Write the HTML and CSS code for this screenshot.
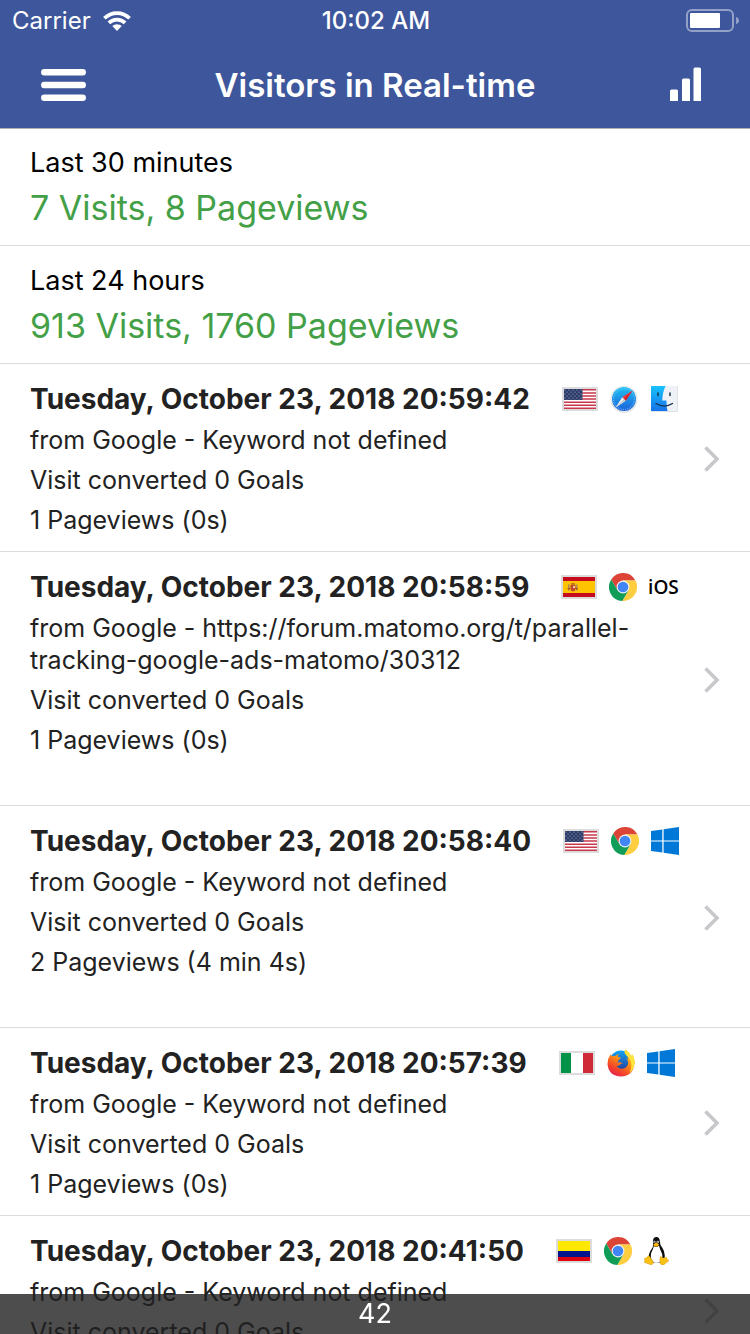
FILE: index.html
```html
<!DOCTYPE html>
<html lang="en">
<head>
<meta charset="utf-8">
<meta name="viewport" content="width=device-width, initial-scale=1">
<title>Visitors in Real-time</title>
<link rel="stylesheet" href="styles.css">
</head>
<body>
<svg class="sprite" aria-hidden="true">
  <defs>
    <linearGradient id="g-safari" x1="0" y1="0" x2="0" y2="1"><stop offset="0" stop-color="#1fc2f5"/><stop offset="1" stop-color="#1c5fd8"/></linearGradient>
    <linearGradient id="g-finder" x1="0" y1="0" x2="0" y2="1"><stop offset="0" stop-color="#17c3fb"/><stop offset="1" stop-color="#1673ea"/></linearGradient>
    <linearGradient id="g-fox" x1="0.8" y1="0" x2="0.2" y2="1"><stop offset="0" stop-color="#ffd82b"/><stop offset="0.45" stop-color="#ff8a16"/><stop offset="0.75" stop-color="#f4422b"/><stop offset="1" stop-color="#e01f55"/></linearGradient>
    <linearGradient id="g-globe" x1="0" y1="0" x2="0" y2="1"><stop offset="0" stop-color="#12a4f2"/><stop offset="1" stop-color="#2a2f8f"/></linearGradient>
    <pattern id="p-stars" width="4" height="4" patternUnits="userSpaceOnUse"><rect width="4" height="4" fill="#2b3a68"/><circle cx="1" cy="1" r="0.6" fill="#b9c0d6"/><circle cx="3" cy="3" r="0.6" fill="#b9c0d6"/></pattern>
    <symbol id="flag-us" viewBox="0 0 32 20">
      <rect width="32" height="20" fill="#fff"/>
      <path d="M0 .8h32M0 3.900h32M0 7h32M0 10.100h32M0 13.200h32M0 16.300h32M0 19.300h32" stroke="#c8374a" stroke-width="1.500"/>
      <rect width="18.500" height="11" fill="url(#p-stars)"/>
    </symbol>
    <symbol id="flag-es" viewBox="0 0 32 20">
      <rect width="32" height="20" fill="#c60b1e"/><rect y="4" width="32" height="12" fill="#ffc400"/>
      <path d="M5 7.500h1.500v6H5zM13 7.500h1.500v6H13z" fill="#a8865a"/>
      <path d="M7.500 8h5v4q0 2-2.500 2.500Q7.500 14 7.500 12z" fill="#c0492b"/>
      <path d="M8 6.200h4v1.500H8z" fill="#b5651d"/><path d="M10 9h2v2h-2z" fill="#e8c9b0"/>
      <path d="M4.500 11.500q1 1 2.500 0M12.500 11.500q1 1 2.500 0" stroke="#b5341d" fill="none"/>
    </symbol>
    <symbol id="flag-it" viewBox="0 0 32 20">
      <rect width="32" height="20" fill="#fff"/><rect width="10" height="20" fill="#009246"/><rect x="22" width="10" height="20" fill="#ce2b37"/>
    </symbol>
    <symbol id="flag-co" viewBox="0 0 32 20">
      <rect width="32" height="20" fill="#ffe800"/><rect y="10" width="32" height="6" fill="#00148e"/><rect y="16" width="32" height="4" fill="#da0010"/>
    </symbol>
    <symbol id="safari" viewBox="0 0 28 28">
      <circle cx="14" cy="14.300" r="13.400" fill="#d5d7da"/><circle cx="14" cy="14" r="13" fill="#eceef0"/>
      <circle cx="14" cy="14" r="12" fill="url(#g-safari)"/>
      <circle cx="14" cy="14" r="10.500" fill="none" stroke="#9fdcf8" stroke-width="1.400" stroke-dasharray=".6 1.23" opacity=".8"/>
      <path d="M22.500 5.500 12.300 12.300l3.400 3.400z" fill="#f5383a"/><path d="M5.500 22.500 12.300 12.300l3.400 3.400z" fill="#f4f4f4"/>
      <path d="M22.500 5.500 15.700 15.700 14 14z" fill="#c9202a"/><path d="M5.500 22.500 15.700 15.700 14 14z" fill="#c6ccd2"/>
    </symbol>
    <symbol id="finder" viewBox="0 0 28 28">
      <rect x="1" y="1" width="27" height="26" rx="1" fill="#dfe3e8"/><rect x="1" y="1" width="26" height="25" rx="1" fill="#eef1f6"/>
      <path d="M1 1h14.500Q12.400 7.500 12.300 15.500h4.200q-.2 5.500 1 10.500H1z" fill="url(#g-finder)"/>
      <path d="M8 8v2.500M20 8v2.500" stroke="#173350" stroke-width="1.500" stroke-linecap="round"/>
      <path d="M6 18.500q8.200 5.200 16.500 0" stroke="#173350" stroke-width="1.400" fill="none" stroke-linecap="round"/>
    </symbol>
    <symbol id="chrome" viewBox="0 0 28 28">
      <path d="M2.230 6.420A14 14 0 0 1 26.450 7.600H14L8.460 17.200z" fill="#db4437"/>
      <path d="M26.450 7.600A14 14 0 0 1 13.300 28l6.240-10.800L14 7.600z" fill="#ffcd40"/>
      <path d="M13.300 28A14 14 0 0 1 2.230 6.420L8.460 17.200h11.080z" fill="#0f9d58"/>
      <circle cx="14" cy="14" r="6.400" fill="#f3f3f3"/><circle cx="14" cy="14" r="5.300" fill="#4285f4"/>
    </symbol>
    <symbol id="windows" viewBox="0 0 28 28">
      <path d="M0 4 11.300 2.400v11H0zM12.600 2.200 28 0v13.400H12.600zM0 14.600h11.300v11L0 24zM12.600 14.600H28V28l-15.400-2.200z" fill="#0078d7"/>
    </symbol>
    <symbol id="firefox" viewBox="0 0 28 28">
      <circle cx="14" cy="13" r="11.500" fill="url(#g-globe)"/>
      <path d="M3.500 5.200q.6 1.500 1.500 2.100 1.800-.8 3.500-.2 1.300-1.700 3.500-2.300-1.500 1.700-1.200 3.300 1.500.4 3 .5-.2 1.600-2.600 2.700.3 1.700-1 2.500 3.200-1.200 5.400.8-1.600 0-2.600 1.200-1.300 1.500-3.600 1.200 2.400 3.200 6.100 2.700 5.300-1 5.700-5.700.1-3-1.800-4.800 1.300.2 2 .8-.7-3.800-3.800-5.800Q17.700 1.500 18.700.3q1.400 2.300 4.100 4.200.2 1.400 1.600 3l.6-2.200Q27.800 9 27.500 14.500 26.300 27 14 27.500 1.500 27 .5 15q0-5.500 3-9.800z" fill="url(#g-fox)"/>
      <path d="M24.400 7.500 25 5.300q2.800 3.700 2.500 9.200-.8 6-5 9.300 2.700-5 1.500-10.300-.6-3-2.400-5-3.300-3-4-5Q17.700 1.500 18.700.3q1.400 2.300 4.100 4.200.2 1.400 1.600 3z" fill="#ffe53b"/>
    </symbol>
    <symbol id="linux" viewBox="0 0 28 28">
      <path d="M11.800 0q3.900-.2 4 4.300 0 3.600 2.500 6.500Q21.200 15 20.700 20q-.2 3.500-3.200 5.500H7.500Q3.700 22 5.300 16.500q.8-2.600 2.800-5.200 1.300-2 .9-5.800Q8.700.3 11.800 0z" fill="#0b0b0b"/>
      <path d="M9.800 9q2.500 2 5.300-.2.700 3.200 2 5.700 2.500 4.500.2 9-2 2.500-5.300 2.200-3.300-.2-4.700-3.700-1.300-4.500 1-8.500 1.100-2 1.500-4.500z" fill="#fff"/>
      <path d="M9.200 7.700q1.800-2 3-1.900 1.700 0 3 1.600-.5 1.500-2.800 2.300-2 .2-3.200-2z" fill="#f5b400"/>
      <circle cx="10.500" cy="4.900" r="1.100" fill="#e8e8e8"/><circle cx="13.700" cy="4.900" r="1.200" fill="#e8e8e8"/><circle cx="10.700" cy="5" r=".5"/><circle cx="13.500" cy="5" r=".5"/>
      <path d="M.6 21.300q2-.2 3-1.800.9-1.700 2.200.2l3 4.300q1.300 3.200-1.500 3.700-1.300 0-3-1-2-.7-3.500-1-.7-.4-.2-2 .2-1.300 0-2.400zM16.200 19.800q.7-.7 1.500.4 1.800 1.500 3.800.2 1.300-.5 1.400 1 .2 1 1.600 1.900.5 1-1.500 2-1.500 1-2.500 2-3 1.500-4.300-.8-.7-2.500 0-6.700z" fill="#f9c016" stroke="#c98a00" stroke-width=".4"/>
    </symbol>
    <symbol id="chevron" viewBox="0 0 18 28"><path d="M2.500 2.500 14 14 2.500 25.500" fill="none" stroke="#c7c7cc" stroke-width="3.600"/></symbol>
  </defs>
</svg>

<div class="app">
  <header class="header">
    <div class="status">
      <div class="status-side">
        <span>Carrier</span>
        <svg class="wifi" viewBox="0 0 28 20" aria-label="Wi-Fi"><g fill="none" stroke="#fff" stroke-width="3.700"><path d="M1.400 7.300a17.800 17.800 0 0 1 25.200 0"/><path d="M5.900 11.900a11.500 11.500 0 0 1 16.200 0"/></g><path d="M9.300 15.100a6.600 6.600 0 0 1 9.400 0L14 20z" fill="#fff"/></svg>
      </div>
      <span class="clock">10:02 AM</span>
      <div class="status-side status-end">
        <svg class="battery" viewBox="0 0 54 24" aria-label="Battery"><rect x="1" y="1" width="46" height="21" rx="5" fill="none" stroke="#93a0c8" stroke-width="2"/><rect x="4" y="4" width="30" height="15" rx="1" fill="#fff"/><path d="M50 8q3 1 3 3.500T50 15z" fill="#93a0c8"/></svg>
      </div>
    </div>
    <nav class="nav">
      <button class="nav-button" type="button" aria-label="Menu"><svg class="menu-icon" viewBox="0 0 46 34"><path d="M3.300 4.300h38.400M3.300 17h38.400M3.300 29.700h38.400" stroke="#fff" stroke-width="6.500" stroke-linecap="round"/></svg></button>
      <h1 class="title">Visitors in Real-time</h1>
      <button class="nav-button" type="button" aria-label="Reports"><svg class="chart-icon" viewBox="0 0 32 34"><path d="M0 33V23q0-1.500 1.500-1.500h5Q8 21.500 8 23v10zM12 33V12q0-1.500 1.500-1.500h5Q20 10.500 20 12v21zM23.500 33V1Q23.500-.5 25-.5h4.500Q31-.5 31 1V33z" fill="#fff"/></svg></button>
    </nav>
  </header>

  <main class="list">
    <section class="summary"><h2 class="summary-label">Last 30 minutes</h2><p class="summary-value">7 Visits, 8 Pageviews</p></section>
    <section class="summary"><h2 class="summary-label">Last 24 hours</h2><p class="summary-value">913 Visits, 1760 Pageviews</p></section>

    <a class="visit" href="#visit-1">
      <div class="visit-body">
        <div class="visit-head"><h3 class="visit-date">Tuesday, October 23, 2018 20:59:42</h3><div class="icons"><svg class="flag"><use href="#flag-us"/></svg><svg class="icon"><use href="#safari"/></svg><svg class="icon"><use href="#finder"/></svg></div></div>
        <p>from Google - Keyword not defined</p><p>Visit converted 0 Goals</p><p>1 Pageviews (0s)</p>
      </div>
      <svg class="chevron"><use href="#chevron"/></svg>
    </a>
    <a class="visit visit-tall" href="#visit-2">
      <div class="visit-body">
        <div class="visit-head"><h3 class="visit-date">Tuesday, October 23, 2018 20:58:59</h3><div class="icons"><svg class="flag"><use href="#flag-es"/></svg><svg class="icon"><use href="#chrome"/></svg><span class="icon ios">iOS</span></div></div>
        <p>from Google - https://forum.matomo.org/t/parallel-tracking-google-ads-matomo/30312</p><p>Visit converted 0 Goals</p><p>1 Pageviews (0s)</p>
      </div>
      <svg class="chevron"><use href="#chevron"/></svg>
    </a>
    <a class="visit visit-tall" href="#visit-3">
      <div class="visit-body">
        <div class="visit-head"><h3 class="visit-date">Tuesday, October 23, 2018 20:58:40</h3><div class="icons"><svg class="flag"><use href="#flag-us"/></svg><svg class="icon"><use href="#chrome"/></svg><svg class="icon"><use href="#windows"/></svg></div></div>
        <p>from Google - Keyword not defined</p><p>Visit converted 0 Goals</p><p>2 Pageviews (4 min 4s)</p>
      </div>
      <svg class="chevron"><use href="#chevron"/></svg>
    </a>
    <a class="visit" href="#visit-4">
      <div class="visit-body">
        <div class="visit-head"><h3 class="visit-date">Tuesday, October 23, 2018 20:57:39</h3><div class="icons"><svg class="flag"><use href="#flag-it"/></svg><svg class="icon"><use href="#firefox"/></svg><svg class="icon"><use href="#windows"/></svg></div></div>
        <p>from Google - Keyword not defined</p><p>Visit converted 0 Goals</p><p>1 Pageviews (0s)</p>
      </div>
      <svg class="chevron"><use href="#chevron"/></svg>
    </a>
    <a class="visit" href="#visit-5">
      <div class="visit-body">
        <div class="visit-head"><h3 class="visit-date">Tuesday, October 23, 2018 20:41:50</h3><div class="icons"><svg class="flag"><use href="#flag-co"/></svg><svg class="icon"><use href="#chrome"/></svg><svg class="icon"><use href="#linux"/></svg></div></div>
        <p>from Google - Keyword not defined</p><p>Visit converted 0 Goals</p><p>1 Pageviews (0s)</p>
      </div>
      <svg class="chevron"><use href="#chevron"/></svg>
    </a>
  </main>
  <div class="counter">42</div>
</div>
</body>
</html>
```

FILE: styles.css
```css
* { box-sizing: border-box; }

body {
  margin: 0;
  background: #fff;
  color: #222;
  font-family: Inter, "Liberation Sans", sans-serif;
}

h1, h2, h3, p { margin: 0; font-weight: 400; }

.sprite { position: absolute; width: 0; height: 0; }

.app {
  display: flex;
  flex-direction: column;
  height: 100vh;
  overflow: hidden;
}

.header {
  position: relative;
  flex: none;
  background: #3e569b;
  color: #fff;
  box-shadow: 0 1px 0 #b2b2b2;
}

.status {
  display: grid;
  grid-template-columns: 1fr auto 1fr;
  align-items: center;
  height: 41px;
  padding: 0 10px 0 12px;
  font-size: 24px;
}

.status-side { display: flex; align-items: center; gap: 12px; }
.status-end { justify-content: flex-end; }
.clock { font-weight: 500; }
.wifi { width: 28px; height: 20px; }
.battery { width: 54px; height: 24px; }

.nav {
  display: flex;
  align-items: center;
  justify-content: space-between;
  height: 87px;
  padding: 0 32px;
}

.nav-button {
  display: flex;
  align-items: center;
  justify-content: center;
  width: 64px;
  height: 64px;
  padding: 0;
  border: 0;
  background: none;
}

.menu-icon { width: 46px; height: 34px; }
.chart-icon { width: 32px; height: 34px; overflow: visible; }
.title { font-size: 33px; font-weight: 600; }

.list {
  flex: 1;
  min-height: 0;
  overflow-y: auto;
  scrollbar-width: none;
}

.summary {
  padding: 19px 30px 15px;
  border-bottom: 1px solid #dcdcdc;
  color: #000;
}

.summary-label { font-size: 27px; line-height: 32px; }
.summary-value { margin-top: 7px; color: #43a047; font-size: 34px; line-height: 44px; }

.visit {
  display: flex;
  align-items: center;
  padding: 18px 29px 15px 30px;
  border-bottom: 1px solid #dcdcdc;
  color: inherit;
  text-decoration: none;
}

.visit-body {
  display: flex;
  flex: 1;
  flex-direction: column;
  gap: 8px;
  min-width: 0;
  font-size: 25px;
  line-height: 32px;
}

.visit-tall .visit-body { padding-bottom: 34px; }

.visit-head {
  display: flex;
  align-items: center;
  gap: 32px;
  height: 34px;
  white-space: nowrap;
}

.visit-date { font-size: 28px; font-weight: 700; }
.icons { display: flex; align-items: center; gap: 12px; }
.flag { width: 36px; height: 24px; border: 2px solid #dcdcdc; }
.icon { width: 28px; height: 28px; }

.ios {
  display: flex;
  align-items: center;
  justify-content: center;
  color: #000;
  font-family: "Open Sans", "Noto Sans", sans-serif;
  font-size: 19px;
  font-weight: 600;
}

.chevron { flex: none; width: 18px; height: 28px; }

.counter {
  position: fixed;
  right: 0;
  bottom: 0;
  left: 0;
  background: rgba(32, 32, 32, 0.8);
  color: #fff;
  font-size: 27px;
  line-height: 40px;
  text-align: center;
}
```
